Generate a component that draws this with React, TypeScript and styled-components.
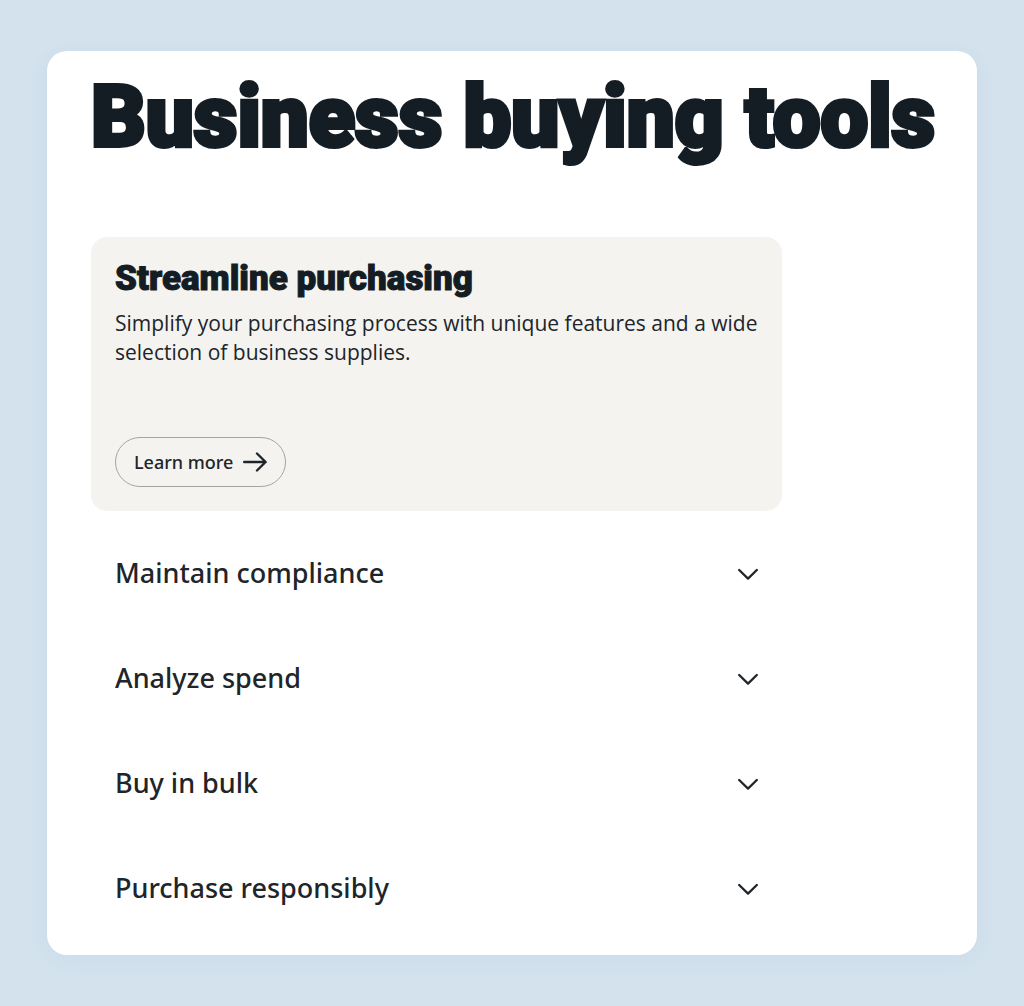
import React, { useState } from "react";
import styled, { createGlobalStyle } from "styled-components";

const Global = createGlobalStyle`
  *, *::before, *::after { box-sizing: border-box; }
  body {
    margin: 0;
    background: #d3e2ed;
    color: #20252a;
    font-family: "Open Sans", "Noto Sans", sans-serif;
  }
`;

const Page = styled.main`
  min-height: 100vh;
  padding: 51px 47px;
`;

const Panel = styled.section`
  padding: 16px 44px 14px;
  border-radius: 20px;
  background: #ffffff;
  box-shadow: 0 4px 20px rgba(90, 130, 170, 0.06);
`;

const Title = styled.h1`
  margin: 0;
  color: #141c24;
  font-family: Roboto, sans-serif;
  font-size: 85px;
  font-weight: 900;
  line-height: 100px;
  white-space: nowrap;
  -webkit-text-stroke: 4px currentColor;
`;

const Tools = styled.div`
  max-width: 691px;
  margin-top: 70px;
`;

const Card = styled.article`
  padding: 24px 16px 24px 24px;
  border-radius: 16px;
  background: #f4f3ef;
`;

const CardTitle = styled.h2`
  margin: 0;
  color: #141c24;
  font-family: Roboto, sans-serif;
  font-size: 35px;
  font-weight: 900;
  line-height: 36px;
  -webkit-text-stroke: 1px currentColor;
`;

const CardText = styled.p`
  margin: 12px 0 70px;
  font-size: 21px;
  font-weight: 500;
  line-height: 29px;
`;

const LearnMore = styled.button`
  display: flex;
  align-items: center;
  gap: 10px;
  height: 50px;
  padding: 0 18px;
  border: 1px solid #a3a4a4;
  border-radius: 25px;
  background: transparent;
  color: inherit;
  font: 500 18px "Noto Sans", sans-serif;
  cursor: pointer;
`;

const List = styled.div`
  display: flex;
  flex-direction: column;
  margin-top: 10px;
`;

const Row = styled.button`
  display: flex;
  align-items: center;
  justify-content: space-between;
  height: 105px;
  padding: 0 24px 2px;
  border: 0;
  background: transparent;
  color: inherit;
  font: 500 27px "Noto Sans", sans-serif;
  text-align: left;
  cursor: pointer;
`;

const topics = ["Maintain compliance", "Analyze spend", "Buy in bulk", "Purchase responsibly"];

const Arrow = () => (
  <svg width="24" height="20" viewBox="0 0 24 20" fill="none" stroke="currentColor" strokeWidth="2.4" strokeLinecap="round" strokeLinejoin="round" aria-hidden="true">
    <path d="M1.2 10H22.6M14 1.5L22.6 10L14 18.5" />
  </svg>
);

const Chevron = () => (
  <svg width="20" height="14" viewBox="0 0 20 14" fill="none" stroke="currentColor" strokeWidth="2.3" strokeLinecap="round" strokeLinejoin="round" aria-hidden="true">
    <path d="M1.2 4L10 12.6L18.8 4" />
  </svg>
);

export default function App() {
  const [open, setOpen] = useState("");
  return (
    <Page>
      <Global />
      <Panel>
        <Title>Business buying tools</Title>
        <Tools>
          <Card>
            <CardTitle>Streamline purchasing</CardTitle>
            <CardText>
              Simplify your purchasing process with unique features and a wide selection of business supplies.
            </CardText>
            <LearnMore type="button">
              Learn more
              <Arrow />
            </LearnMore>
          </Card>
          <List>
            {topics.map((topic) => (
              <Row
                key={topic}
                type="button"
                aria-expanded={open === topic}
                onClick={() => setOpen(open === topic ? "" : topic)}
              >
                {topic}
                <Chevron />
              </Row>
            ))}
          </List>
        </Tools>
      </Panel>
    </Page>
  );
}
